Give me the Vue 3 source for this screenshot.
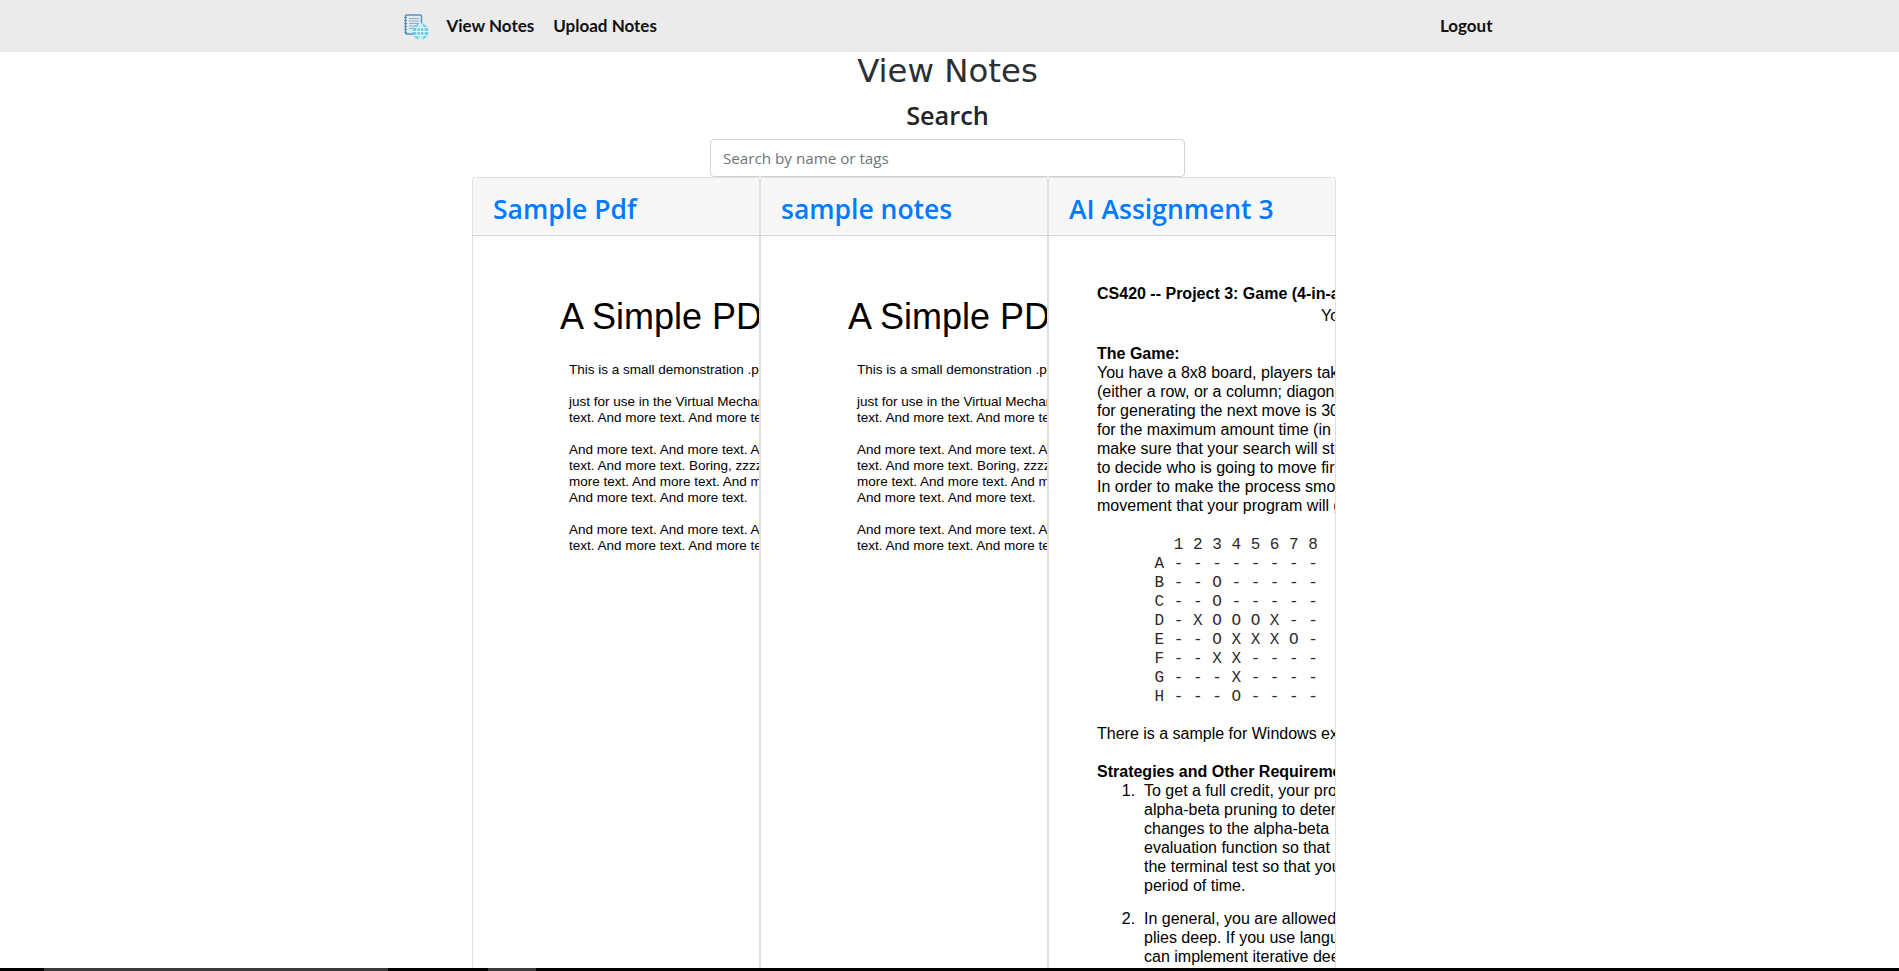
<template>
  <div class="page">
    <nav class="navbar">
      <div class="nav-inner">
        <svg class="logo" viewBox="0 0 26 26" width="26" height="26">
          <rect x="2.5" y="1" width="16" height="19" rx="1" fill="#e3ebf2" stroke="#5b93bf" stroke-width="1.5" />
          <path d="M1.5 3.5h2.5M1.5 6.5h2.5M1.5 9.5h2.5M1.5 12.5h2.5M1.5 15.5h2.5M1.5 18.5h2.5" stroke="#4f86b3" stroke-width="1.2" fill="none" />
          <path d="M6 4.5h10M6 7h10M6 9.5h10M6 12h7M6 14.5h5" stroke="#93a9bd" stroke-width="1" fill="none" />
          <circle cx="17.5" cy="17.5" r="8" fill="#66cfe6" />
          <path d="M17.5 9.5v16M9.5 17.5h16M11 13.5h13M11 21.5h13M17.5 9.5c-5 4.5-5 11.5 0 16M17.5 9.5c5 4.5 5 11.5 0 16" stroke="#effbfd" stroke-width="1.1" fill="none" />
        </svg>
        <a class="nav-link">View Notes</a>
        <a class="nav-link">Upload Notes</a>
        <a class="nav-link logout">Logout</a>
      </div>
    </nav>

    <div class="content">
      <h1 class="title">View Notes</h1>
      <h3 class="search-title">Search</h3>
      <input class="search" type="text" placeholder="Search by name or tags" />
    </div>

    <div class="cards">
      <div v-for="card in cards" :key="card.name" class="card">
        <div class="card-header"><a>{{ card.name }}</a></div>
        <div class="card-body">
          <div v-if="card.kind === 'pdf'" class="pdf">
            <div class="pdf-title">A Simple PDF File</div>
            <p v-for="(lines, i) in sampleText" :key="i" class="pdf-par">
              <span v-for="line in lines" :key="line">{{ line }}</span>
            </p>
          </div>
          <div v-else class="doc">
            <div class="doc-head"><b>CS420 -- Project 3: Game (4-in-a-row)</b></div>
            <div class="doc-due">You</div>
            <div class="doc-sec">
              <b>The Game:</b>
              <span v-for="line in gameText" :key="line">{{ line }}</span>
            </div>
            <pre class="board">{{ board }}</pre>
            <div class="doc-sample">There is a sample for Windows exe</div>
            <div class="doc-sec"><b>Strategies and Other Requirements</b></div>
            <ol class="doc-list">
              <li v-for="(item, i) in strategies" :key="i">
                <span v-for="line in item" :key="line">{{ line }}</span>
              </li>
            </ol>
          </div>
        </div>
      </div>
    </div>

    <div class="bottom-bar">
      <i class="seg-a"></i>
      <i class="seg-b"></i>
    </div>
  </div>
</template>

<script setup>
const cards = [
  { name: 'Sample Pdf', kind: 'pdf' },
  { name: 'sample notes', kind: 'pdf' },
  { name: 'AI Assignment 3', kind: 'doc' }
]

const sampleText = [
  ['This is a small demonstration .pdf'],
  ['just for use in the Virtual Mechanics', 'text. And more text. And more text.'],
  ['And more text. And more text. And', 'text. And more text. Boring, zzzzz.', 'more text. And more text. And more', 'And more text. And more text.'],
  ['And more text. And more text. And', 'text. And more text. And more text.']
]

const gameText = [
  'You have a 8x8 board, players take',
  '(either a row, or a column; diagonals',
  'for generating the next move is 30',
  'for the maximum amount time (in',
  'make sure that your search will stop',
  'to decide who is going to move first',
  'In order to make the process smooth',
  'movement that your program will gen'
]

const board = `        1 2 3 4 5 6 7 8
      A - - - - - - - -
      B - - O - - - - -
      C - - O - - - - -
      D - X O O O X - -
      E - - O X X X O -
      F - - X X - - - -
      G - - - X - - - -
      H - - - O - - - -`

const strategies = [
  ['To get a full credit, your program', 'alpha-beta pruning to determine', 'changes to the alpha-beta', 'evaluation function so that', 'the terminal test so that you', 'period of time.'],
  ['In general, you are allowed', 'plies deep. If you use language', 'can implement iterative deep']
]
</script>

<style>
html, body { margin: 0; height: 100%; overflow: hidden; background: #fff; }
</style>

<style scoped>
.page { height: 971px; overflow: hidden; position: relative; font-family: "Open Sans", "Noto Sans", sans-serif; color: #212529; }

.navbar { height: 52px; background: #ebebeb; }
.nav-inner { box-sizing: border-box; width: 1110px; margin: 0 auto; padding-bottom: 2px; display: flex; align-items: center; height: 100%; font-family: Lato, sans-serif; }
.logo { margin: 4px 18px 0 8px; }
.nav-link { font-size: 17px; font-weight: 700; color: #111; margin-right: 19px; }
.logout { margin-left: auto; margin-right: 12px; }

.content { width: 1895px; }
.title { margin: 0; height: 43px; text-align: center; font: 400 32.4px/38px "DejaVu Sans", sans-serif; color: #2b3035; }
.search-title { margin: 0; height: 44px; text-align: center; font: 600 25.3px/40px "Open Sans", sans-serif; }
.search { display: block; box-sizing: border-box; width: 475px; height: 38px; margin: 0 auto; padding: 6px 12px; border: 1px solid #ced4da; border-radius: 4px; font: 400 15.2px "Open Sans", sans-serif; outline: none; }
.search::placeholder { color: #6c757d; opacity: 1; }

.cards { display: flex; width: 864px; margin-left: 472px; height: 800px; }
.card { width: 288px; box-sizing: border-box; border: 1px solid rgba(0,0,0,.125); border-radius: 4px 4px 0 0; overflow: hidden; background: #fff; flex: none; }
.card-header { height: 58px; box-sizing: border-box; padding: 0 20px; background: #f7f7f7; border-bottom: 1px solid rgba(0,0,0,.125); font: 600 26.5px/62px "Open Sans", sans-serif; color: #007bff; white-space: nowrap; }
.card-body { white-space: nowrap; font-family: "Liberation Sans", sans-serif; color: #000; }

.pdf { padding: 61px 0 0 86px; }
.pdf-title { font-size: 36px; line-height: 40px; margin-bottom: 25px; padding-left: 1px; }
.pdf-par { margin: 0 0 16px 10px; font-size: 13.5px; line-height: 16px; }
.pdf-par span { display: block; }

.doc { padding: 48px 0 0 48px; font-size: 16px; line-height: 19px; }
.doc-head { height: 22px; }
.doc-due { padding-left: 224px; height: 38px; }
.doc-sec span { display: block; }
.doc-sec b { display: block; }
.board { margin: 21px 0 0 0; font: 16px/19px "Liberation Mono", monospace; color: #2a2a2a; }
.doc-sample { margin-top: 17px; height: 38px; }
.doc-list { margin: 0; padding-left: 47px; }
.doc-list li { margin-bottom: 14px; }
.doc-list li::marker { content: counter(list-item) ".\00a0\00a0"; }
.doc-list span { display: block; }

.bottom-bar { position: absolute; left: 0; right: 0; bottom: 0; height: 3px; background: #000; }
.bottom-bar i { position: absolute; top: 0; height: 3px; background: #3a3a3a; }
.seg-a { left: 44px; width: 344px; }
.seg-b { left: 488px; width: 48px; }
</style>
